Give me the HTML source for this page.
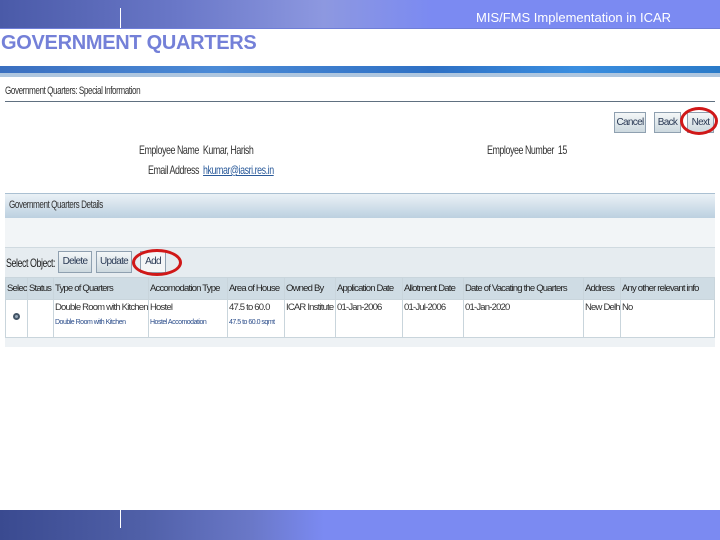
<!DOCTYPE html>
<html><head><meta charset="utf-8"><style>
*{margin:0;padding:0;box-sizing:border-box}
body{width:720px;height:540px;position:relative;background:#fff;font-family:"Liberation Sans",sans-serif;overflow:hidden}
.a{position:absolute}
.n{font-size:11px;letter-spacing:-0.6px;color:#333;white-space:nowrap;transform:scaleX(0.74);transform-origin:left}
.btn{position:absolute;border:1px solid #8fa0b0;background:linear-gradient(#f4f7f8,#cdd9df);font-size:10px;color:#2a3a55;text-align:center;letter-spacing:-0.7px}
table{border-collapse:collapse;position:absolute;left:5px;top:277px;width:710px;table-layout:fixed}
td{border:1px solid #c9d5dc;font-size:9.5px;letter-spacing:-0.8px;color:#333;vertical-align:top;padding:2px 1px;white-space:nowrap;overflow:hidden}
tr.h td{background:#cfdce4;height:22px;padding-top:5px;color:#222}
.s{font-size:7px;color:#2a4c8a;display:block;margin-top:6px;letter-spacing:-0.5px}
</style></head><body>
<div class="a" style="left:0;top:0;width:720px;height:28px;background:linear-gradient(90deg,#4a5aa8 0%,#6a78c8 25%,#8d98e0 45%,#7b8af2 60%,#7b8af2 100%)"></div>
<div class="a" style="left:120px;top:8px;width:1px;height:20px;background:#fff"></div>
<div class="a" style="left:0;top:28px;width:720px;height:1px;background:#6f7ed8"></div>
<div class="a" style="left:476px;top:10px;font-size:13px;color:#fff">MIS/FMS Implementation in ICAR</div>
<div class="a" style="left:1px;top:32px;font-size:20px;font-weight:bold;color:#7480d8;letter-spacing:-0.3px">GOVERNMENT QUARTERS</div>
<div class="a" style="left:0;top:66px;width:720px;height:7px;background:linear-gradient(90deg,#3a6fc0,#4b8ad6 30%,#2e70c4 60%,#3a8ee0 80%,#2a7ac8)"></div>
<div class="a" style="left:0;top:73px;width:720px;height:4px;background:#aec6df"></div>
<div class="a n" style="left:5px;top:85px;font-size:11px">Government Quarters: Special Information</div>
<div class="a" style="left:5px;top:101px;width:710px;height:1px;background:#607080"></div>
<div class="btn" style="left:614px;top:112px;width:32px;height:21px;line-height:19px">Cancel</div>
<div class="btn" style="left:654px;top:112px;width:27px;height:21px;line-height:19px">Back</div>
<div class="btn" style="left:687px;top:112px;width:27px;height:21px;line-height:19px">Next</div>
<div class="a" style="left:680px;top:107px;width:38px;height:28px;border:3px solid #d01818;border-radius:50%"></div>
<div class="a n" style="left:139px;top:143px;font-size:12px">Employee Name&nbsp; Kumar, Harish</div>
<div class="a n" style="left:148px;top:163px;font-size:12px">Email Address&nbsp; <span style="color:#2a5a9a;text-decoration:underline">hkumar@iasri.res.in</span></div>
<div class="a n" style="left:487px;top:143px;font-size:12px">Employee Number&nbsp; 15</div>
<div class="a" style="left:5px;top:193px;width:710px;height:25px;background:linear-gradient(#eaf1f6,#bcd0e0);border-top:1px solid #aac0d2"></div>
<div class="a n" style="left:9px;top:199px;font-size:11px">Government Quarters Details</div>
<div class="a" style="left:5px;top:218px;width:710px;height:29px;background:#f2f5f7"></div>
<div class="a" style="left:5px;top:247px;width:710px;height:30px;background:#e6ecf0;border-top:1px solid #d0dae0"></div>
<div class="a n" style="left:6px;top:256px;color:#222;font-size:12px">Select Object:</div>
<div class="btn" style="left:58px;top:251px;width:34px;height:22px;line-height:20px">Delete</div>
<div class="btn" style="left:96px;top:251px;width:36px;height:22px;line-height:20px">Update</div>
<div class="btn" style="left:140px;top:251px;width:26px;height:22px;line-height:20px;background:#f4f6f7">Add</div>
<div class="a" style="left:132px;top:249px;width:50px;height:27px;border:3px solid #d01818;border-radius:50%"></div>
<table>
<colgroup><col style="width:22px"><col style="width:26px"><col style="width:95px"><col style="width:79px"><col style="width:57px"><col style="width:51px"><col style="width:67px"><col style="width:61px"><col style="width:120px"><col style="width:37px"><col></colgroup>
<tr class="h"><td>Select</td><td>Status</td><td>Type of Quarters</td><td>Accomodation Type</td><td>Area of House</td><td>Owned By</td><td>Application Date</td><td>Allotment Date</td><td>Date of Vacating the Quarters</td><td>Address</td><td>Any other relevant info</td></tr>
<tr style="height:38px;background:#fff"><td style="text-align:center;padding-top:12px"><span style="display:inline-block;width:7px;height:7px;border-radius:50%;border:2px solid #456;background:#9ab"></span></td><td></td><td>Double Room with Kitchen<span class="s">Double Room with Kitchen</span></td><td>Hostel<span class="s">Hostel Accomodation</span></td><td>47.5 to 60.0<span class="s">47.5 to 60.0 sqmt</span></td><td>ICAR Institute</td><td>01-Jan-2006</td><td>01-Jul-2006</td><td>01-Jan-2020</td><td>New Delhi</td><td>No</td></tr>
</table>
<div class="a" style="left:5px;top:338px;width:710px;height:9px;background:#eef2f5"></div>
<div class="a" style="left:0;top:510px;width:720px;height:30px;background:linear-gradient(90deg,#3a4a90 0%,#5060a8 20%,#6a78c8 35%,#7b8af2 45%,#7b8af2 100%)"></div>
<div class="a" style="left:120px;top:510px;width:1px;height:18px;background:#fff"></div>
</body></html>
